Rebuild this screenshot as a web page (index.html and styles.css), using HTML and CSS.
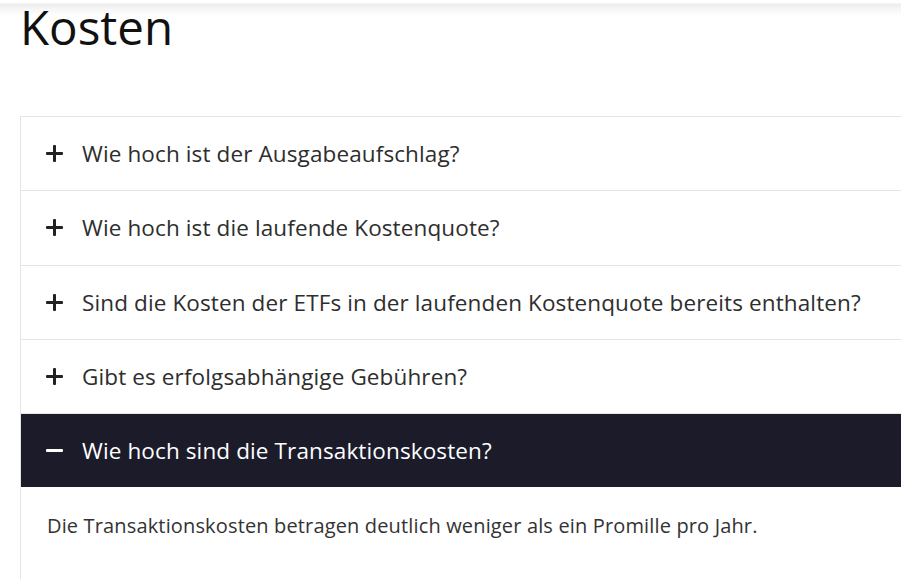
FILE: index.html
```html
<!DOCTYPE html>
<html lang="de">
<head>
<meta charset="utf-8">
<title>Kosten</title>
<link rel="stylesheet" href="styles.css">
</head>
<body>
<div class="topbar"></div>
<main class="page">
  <h1 class="title">Kosten</h1>
  <div class="accordion">
    <div class="item">
      <div class="head"><span class="icon plus"></span><span class="q">Wie hoch ist der Ausgabeaufschlag?</span></div>
    </div>
    <div class="item">
      <div class="head"><span class="icon plus"></span><span class="q">Wie hoch ist die laufende Kostenquote?</span></div>
    </div>
    <div class="item">
      <div class="head"><span class="icon plus"></span><span class="q">Sind die Kosten der ETFs in der laufenden Kostenquote bereits enthalten?</span></div>
    </div>
    <div class="item">
      <div class="head"><span class="icon plus"></span><span class="q">Gibt es erfolgsabhängige Gebühren?</span></div>
    </div>
    <div class="item open">
      <div class="head"><span class="icon minus"></span><span class="q">Wie hoch sind die Transaktionskosten?</span></div>
      <div class="body">
        <p>Die Transaktionskosten betragen deutlich weniger als ein Promille pro Jahr.</p>
      </div>
    </div>
  </div>
</main>
</body>
</html>
```
FILE: styles.css
```css
* { box-sizing: border-box; }
html, body { margin: 0; padding: 0; background: #fff; }
body {
  font-family: "Open Sans", "Noto Sans", sans-serif;
  overflow: hidden;
  width: 901px;
  height: 585px;
}
.topbar {
  height: 16px;
  margin-bottom: -16px;
  background: linear-gradient(#fff 0, #fff 3px, #ececec 4px, #f6f6f6 9px, #fff 16px);
}
.page {
  padding: 0 0 0 20px;
}
.title {
  margin: 0;
  padding-top: 0;
  font-size: 47.5px;
  font-weight: 400;
  line-height: 54px;
  color: #111;
  height: 116px;
}
.accordion {
  width: 920px;
  border-left: 1px solid #e4e4e4;
}
.item { border-top: 1px solid #e4e4e4; }
.head {
  height: 73.25px;
  display: flex;
  align-items: center;
  padding-left: 25px;
  color: #2e2e2e;
}
.q {
  font-size: 22.5px;
  letter-spacing: 0.12px;
}
.icon {
  position: relative;
  width: 17px;
  height: 17px;
  margin-right: 19px;
  flex: none;
}
.icon::before, .icon::after {
  content: "";
  position: absolute;
  background: currentColor;
  border-radius: 1px;
}
.icon::before { left: 0; top: 7px; width: 17px; height: 3px; }
.plus::after { left: 7px; top: 0; width: 3px; height: 17px; }
.plus { color: #222; }
.open .head {
  background: #1b1b2a;
  color: #fff;
}
.body {
  padding: 25px 0 40px 26px;
}
.body p {
  margin: 0;
  font-size: 20px;
  letter-spacing: 0.15px;
  color: #333;
}
```
